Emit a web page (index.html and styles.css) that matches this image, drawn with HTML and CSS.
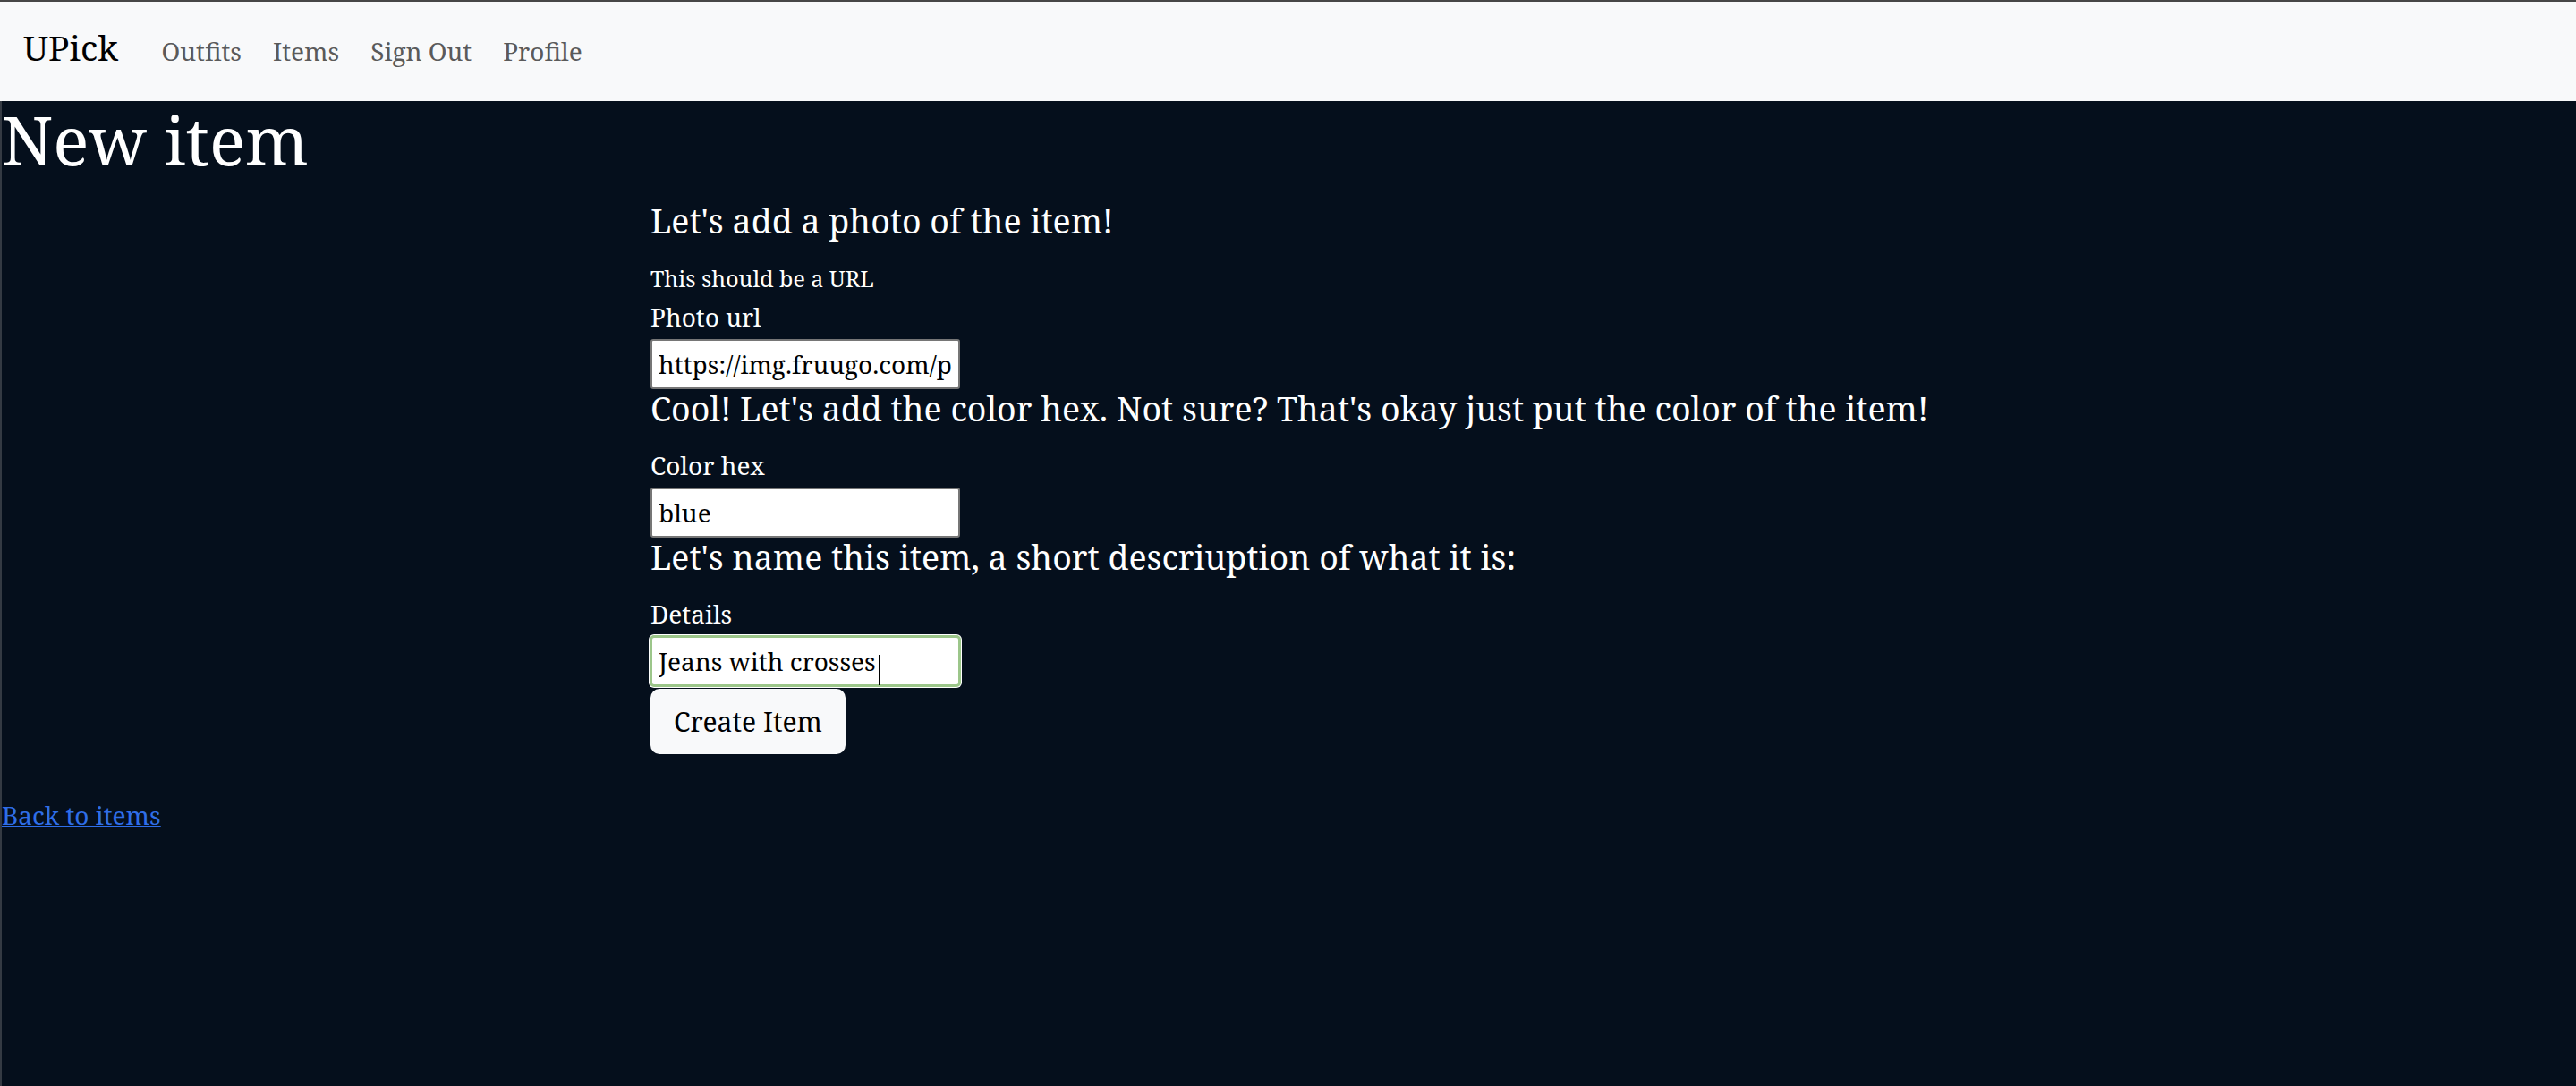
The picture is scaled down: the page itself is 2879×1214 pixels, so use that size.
FILE: index.html
```html
<!DOCTYPE html>
<html lang="en">
<head>
<meta charset="utf-8">
<title>UPick – New item</title>
<link rel="stylesheet" href="styles.css">
</head>
<body>
<nav class="navbar">
  <a class="brand" href="#">UPick</a>
  <a class="nav-link" href="#">Outfits</a>
  <a class="nav-link" href="#">Items</a>
  <a class="nav-link" href="#">Sign Out</a>
  <a class="nav-link" href="#">Profile</a>
</nav>
<main class="page">
  <h1 class="title">New item</h1>
  <form class="item-form">
    <h4 class="prompt">Let's add a photo of the item!</h4>
    <p class="hint">This should be a URL</p>
    <label class="field-label after-hint" for="photo">Photo url</label>
    <input class="field" id="photo" type="text" value="https://img.fruugo.com/product/jeans.jpg">
    <h4 class="prompt">Cool! Let's add the color hex. Not sure? That's okay just put the color of the item!</h4>
    <label class="field-label" for="color">Color hex</label>
    <input class="field" id="color" type="text" value="blue">
    <h4 class="prompt">Let's name this item, a short descriuption of what it is:</h4>
    <label class="field-label" for="details">Details</label>
    <span class="field-wrap">
      <input class="field field-focused" id="details" type="text" value="Jeans with crosses">
      <span class="caret"></span>
    </span>
    <button class="submit" type="button">Create Item</button>
  </form>
  <p class="back"><a href="#">Back to items</a></p>
</main>
</body>
</html>
```
FILE: styles.css
```css
html {
  background: #050f1c;
}

body {
  margin: 0;
  min-height: 1212px;
  background: #050f1c;
  border-top: 2px solid #474747;
  font-family: "Noto Serif", "DejaVu Serif", serif;
}

.navbar {
  display: flex;
  align-items: baseline;
  box-sizing: border-box;
  height: 111px;
  padding: 28px 0 0 26px;
  background: #f8f9fa;
}

.brand {
  font-size: 39px;
  line-height: 46px;
  color: #000;
  text-decoration: none;
  margin-right: 31px;
}

.nav-link {
  font-size: 28px;
  line-height: 44px;
  color: #5a5a5a;
  text-decoration: none;
  padding: 0 17.5px;
}

.page {
  min-height: 1101px;
  border-left: 2px solid #343a43;
  color: #fff;
}

.title {
  margin: 0;
  font-size: 75px;
  line-height: 87px;
  font-weight: 400;
}

.item-form {
  width: 1427px;
  margin: 26.5px auto 0;
}

.prompt {
  margin: 2px 0 0;
  font-size: 37.5px;
  line-height: 40px;
  font-weight: 400;
  white-space: nowrap;
}

.hint {
  margin: 28.4px 0 0;
  font-size: 25px;
  line-height: 32px;
}

.field-label {
  display: block;
  margin-top: 25px;
  font-size: 28px;
  line-height: 36px;
}

.field-label.after-hint {
  margin-top: 9.5px;
}

.field {
  display: block;
  box-sizing: border-box;
  width: 346px;
  height: 56px;
  margin: 7px 0 0;
  padding: 0 7px;
  border: 2px solid #767676;
  border-radius: 3px;
  background: #fff;
  color: #000;
  font-family: "Noto Serif", "DejaVu Serif", serif;
  font-size: 28px;
  outline: none;
}

.field-wrap {
  position: relative;
  display: block;
  width: 346px;
}

.field-focused {
  border-color: #9cc68a;
  border-radius: 4px;
  box-shadow: 0 0 0 1px #9cc68a, 0 0 0 2px #fff;
}

.caret {
  position: absolute;
  left: 255px;
  top: 21px;
  width: 2px;
  height: 34px;
  background: #000;
}

.submit {
  display: block;
  height: 73px;
  margin-top: 3px;
  padding: 0 26px;
  border: 0;
  border-radius: 10px;
  background: #f8f9fa;
  color: #000;
  font-family: "Noto Serif", "DejaVu Serif", serif;
  font-size: 30px;
}

.back {
  margin: 50px 0 0;
  font-size: 28px;
  line-height: 36px;
}

.back a {
  color: #2f6ee9;
  text-decoration-thickness: 2px;
}
```
